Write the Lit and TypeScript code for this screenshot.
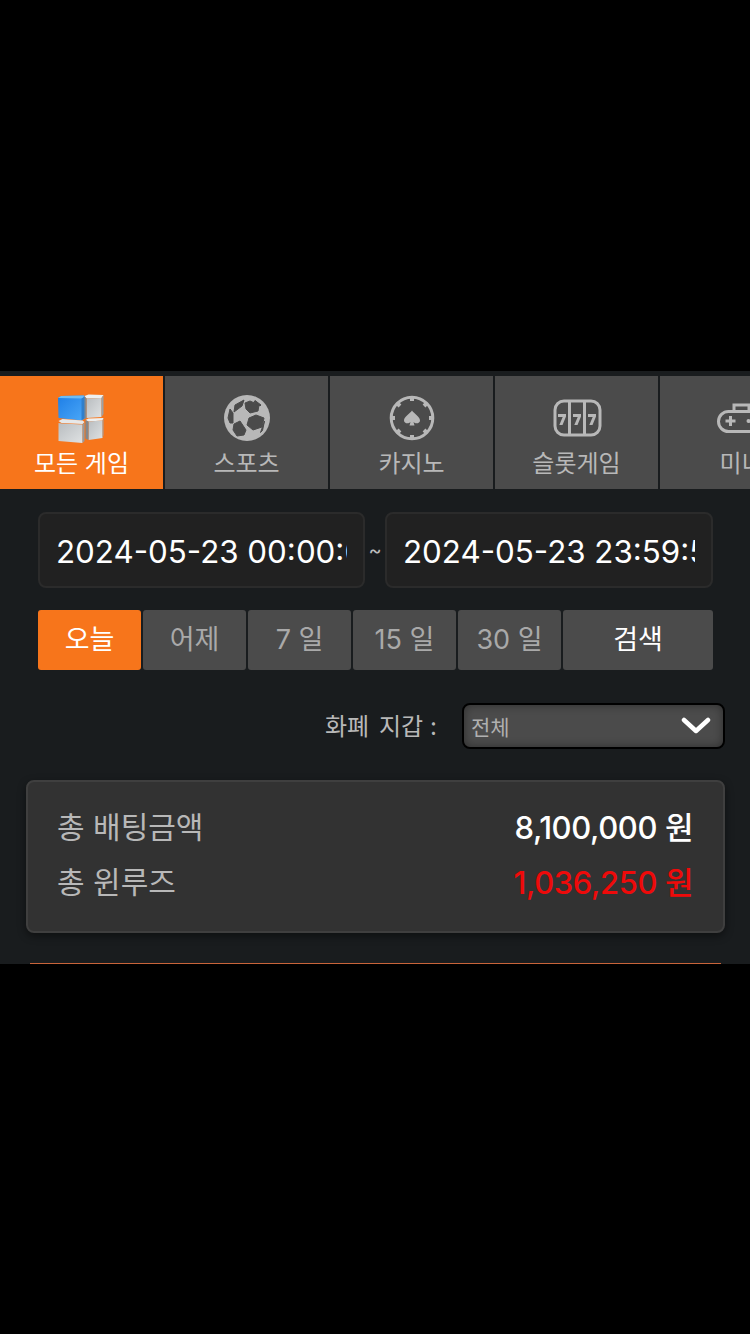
import { LitElement, html, css, svg } from "lit";
import { customElement } from "lit/decorators.js";

const GREY = "#b8b8b8";
const TAB_BG = "#4b4b4b";

const icons = {
  all: html`<svg width="60" height="60" viewBox="0 0 60 60">
    <defs>
      <linearGradient id="blue" x1="0" y1="0" x2="1" y2="1"><stop offset="0" stop-color="#1e7ee6"/><stop offset="1" stop-color="#4ba8f8"/></linearGradient>
      <linearGradient id="grey" x1="0" y1="0" x2="1" y2="1"><stop offset="0" stop-color="#b9bdc0"/><stop offset="1" stop-color="#dfe2e3"/></linearGradient>
    </defs>
    <g transform="translate(-1.5 0)">
      <path d="M7.500 10l3-2 23-.5 1 1V30l-3 2.500L8 30z" fill="url(#blue)"/>
      <path d="M7.500 10l3-2 23-.5-1 3z" fill="#6cbcf6"/>
      <path d="M31 10.500l3.500-2V30L31 32.500z" fill="#2f7fcb"/>
      <path d="M34 8l4-1.500 15 .5-2 3-15 .5z" fill="#eef0f0"/>
      <path d="M36 10.500l15-.5v19l-15 1z" fill="url(#grey)"/>
      <path d="M51 10l2-3v19l-2 3z" fill="#9da1a4"/>
      <path d="M34 8.500l2 2V30l-2 1.500z" fill="#84888b"/>
      <path d="M8 33l4-2 20 1.500 2 1.500-2 2-21-1z" fill="#e6e8e9"/>
      <path d="M8 35l3 .500 21 1V55l-24-2z" fill="url(#grey)"/>
      <path d="M32 36.500l2-2V53l-2 2z" fill="#979b9e"/>
      <path d="M35 32l3-1.500 15-.5-1 2.500-14 1z" fill="#eef0f0"/>
      <path d="M38 33.500l14-1V50l-14 2z" fill="url(#grey)"/>
      <path d="M35 32l3 1.500V52l-3-1.500z" fill="#84888b"/>
      <path d="M52 32.500l1-2.500v17l-1 3z" fill="#9da1a4"/>
    </g>
  </svg>`,
  sports: html`<svg width="60" height="60" viewBox="0 0 60 60">
    <circle cx="30" cy="30" r="23" fill="${GREY}"/>
    <g fill="${TAB_BG}" stroke="${TAB_BG}" stroke-width="1" stroke-linejoin="round">
      <path d="M18 17l9-5-2 6-8 6z"/>
      <path d="M28 15l5-2 9 4-1 6-8 2-4-4z"/>
      <path d="M32 30l7-3 8 3-2 9-9 3-6-5z"/>
      <path d="M17 36l6-3 6 9-2 5-7 1-4-6z"/>
      <path d="M13 21l3 4v10h-3l-2-5z"/>
      <path d="M47.500 33l-2 9.500-2 2 2.500-7z"/>
      <path d="M38 12.500l6 4.500-1 1-6-4z"/>
    </g>
  </svg>`,
  casino: html`<svg width="60" height="60" viewBox="0 0 60 60">
    <circle cx="30" cy="30" r="20.800" fill="none" stroke="${GREY}" stroke-width="3"/>
    ${[0, 45, 90, 135, 180, 225, 270, 315].map(
      (a) => svg`<rect x="28" y="8.500" width="4" height="4.500" fill="${GREY}" transform="rotate(${a} 30 30)"/>`
    )}
    <path d="M30 22.500c2 3.200 8 6 8 10 0 3-4.500 3.800-6.500 1.500l1 3.500h-5l1-3.500c-2 2.300-6.500 1.500-6.500-1.500 0-4 6-6.800 8-10z" fill="${GREY}"/>
  </svg>`,
  slot: html`<svg width="60" height="60" viewBox="0 0 60 60">
    <rect x="8" y="13" width="45" height="34" rx="9" fill="none" stroke="${GREY}" stroke-width="3"/>
    <path d="M22.500 13v34M37.500 13v34" stroke="${GREY}" stroke-width="3"/>
    <path d="M11 26h8v2.500L15.500 37h-3.200l3.400-8H11zM26 26h8v2.500L30.500 37h-3.200l3.400-8H26zM41 26h8v2.500L45.500 37h-3.200l3.400-8H41z" fill="${GREY}"/>
  </svg>`,
  mini: html`<svg width="50" height="30" viewBox="0 0 50 30">
    <path d="M11.500 8.500h27a10 10 0 0 1 0 20h-27a10 10 0 0 1 0-20z" fill="none" stroke="${GREY}" stroke-width="3"/>
    <path d="M17 8.500V2h15v6.500" fill="none" stroke="${GREY}" stroke-width="3"/>
    <path d="M8.500 18h10M13.500 13v10" stroke="${GREY}" stroke-width="3"/>
    <circle cx="31.500" cy="18" r="2" fill="${GREY}"/><circle cx="39" cy="18" r="2" fill="${GREY}"/>
  </svg>`,
};

const tabs = [
  { label: "모든 게임", icon: icons.all, active: true },
  { label: "스포츠", icon: icons.sports },
  { label: "카지노", icon: icons.casino },
  { label: "슬롯게임", icon: icons.slot },
  { label: "미니", icon: icons.mini },
];

@customElement("app-root")
export class AppRoot extends LitElement {
  static styles = css`
    :host {
      display: block;
      width: 750px;
      height: 1334px;
      background: #000;
      overflow: hidden;
      font-family: Inter, "Noto Sans CJK KR", sans-serif;
    }
    .panel {
      margin-top: 371px;
      height: 593px;
      background: #191c1e;
      padding-top: 5px;
      box-sizing: border-box;
      overflow: hidden;
    }
    .tabs {
      display: flex;
      gap: 2px;
      height: 113px;
      width: 750px;
      overflow: hidden;
    }
    .tab {
      flex: 0 0 163px;
      background: #4b4b4b;
      color: #b8b8b8;
      display: flex;
      flex-direction: column;
      align-items: center;
      font-size: 24px;
      line-height: 30px;
    }
    .tab.active {
      background: #f7751b;
      color: #fff;
    }
    .ico {
      height: 60px;
      margin-top: 12px;
      display: flex;
      align-items: center;
      justify-content: center;
      width: 100%;
    }
    .tab .name {
      margin-top: 1px;
      white-space: nowrap;
    }
    .dates {
      display: flex;
      align-items: center;
      margin: 23px 0 0 38px;
      width: 675px;
    }
    .dates input {
      box-sizing: border-box;
      width: 327px;
      height: 76px;
      padding: 3px 16px 0;
      background: #212121;
      border: 2px solid #2b2b2b;
      border-radius: 8px;
      color: #fff;
      font-family: inherit;
      font-size: 31.3px;
      outline: none;
    }
    .dates input.end {
      width: 328px;
    }
    .tilde {
      flex: 1;
      text-align: center;
      color: #bbb;
      font-size: 20px;
    }
    .ranges {
      display: flex;
      gap: 2px;
      margin: 22px 0 0 38px;
      width: 675px;
      height: 60px;
    }
    .ranges button {
      flex: 0 0 103px;
      border: 0;
      padding: 0 0 6px;
      background: #4b4b4b;
      color: #a9a9a9;
      border-radius: 3px;
      font-family: inherit;
      font-size: 27px;
    }
    .ranges button.on {
      background: #f7751b;
      color: #fff;
    }
    .ranges button.search {
      flex: 1;
      color: #fff;
    }
    .wallet {
      display: flex;
      justify-content: flex-end;
      align-items: center;
      gap: 25px;
      margin: 33px 25px 0 0;
      height: 46px;
      color: #b8b8b8;
      font-size: 24px;
    }
    .wallet .label {
      padding-bottom: 4px;
      word-spacing: 3px;
    }
    .wallet .colon {
      margin-left: 7px;
    }
    .select {
      box-sizing: border-box;
      width: 263px;
      height: 46px;
      border: 2px solid #000;
      border-radius: 8px;
      background: #4b4b4b;
      box-shadow: inset 0 0 10px rgba(0, 0, 0, 0.4);
      display: flex;
      align-items: center;
      justify-content: space-between;
      padding: 0 12px 0 7px;
      font-size: 21px;
      color: #b0b0b0;
    }
    .card {
      box-sizing: border-box;
      margin: 31px 25px 0 26px;
      height: 153px;
      background: #323232;
      border: 2px solid #3f3f3f;
      border-radius: 8px;
      box-shadow: 0 3px 8px rgba(0, 0, 0, 0.45);
      padding: 18px 30px 0 29px;
    }
    .row {
      display: flex;
      justify-content: space-between;
      height: 55px;
      line-height: 55px;
      font-size: 30px;
      color: #b8b8b8;
    }
    .row b {
      font-weight: 500;
      font-size: 31px;
      color: #fff;
      letter-spacing: -0.4px;
    }
    .row b.red {
      color: #ee0a0a;
    }
    .line {
      margin: 30px 29px 0 30px;
      height: 1px;
      background: #c8643a;
    }
  `;

  render() {
    return html`
      <div class="panel">
        <div class="tabs">
          ${tabs.map(
            (t) => html`<div class="tab ${t.active ? "active" : ""}">
              <div class="ico">${t.icon}</div>
              <div class="name">${t.label}</div>
            </div>`
          )}
        </div>
        <div class="dates">
          <input value="2024-05-23 00:00:00" />
          <div class="tilde">~</div>
          <input class="end" value="2024-05-23 23:59:59" />
        </div>
        <div class="ranges">
          <button class="on">오늘</button>
          <button>어제</button>
          <button>7 일</button>
          <button>15 일</button>
          <button>30 일</button>
          <button class="search">검색</button>
        </div>
        <div class="wallet">
          <span class="label">화폐 지갑<span class="colon">:</span></span>
          <div class="select">
            <span>전체</span>
            <svg width="30" height="18" viewBox="0 0 30 18">
              <path d="M3 3l12 11L27 3" fill="none" stroke="#fff" stroke-width="4.500" stroke-linecap="round" stroke-linejoin="round" />
            </svg>
          </div>
        </div>
        <div class="card">
          <div class="row"><span>총 배팅금액</span><b>8,100,000 원</b></div>
          <div class="row"><span>총 윈루즈</span><b class="red">1,036,250 원</b></div>
        </div>
        <div class="line"></div>
      </div>
    `;
  }
}
